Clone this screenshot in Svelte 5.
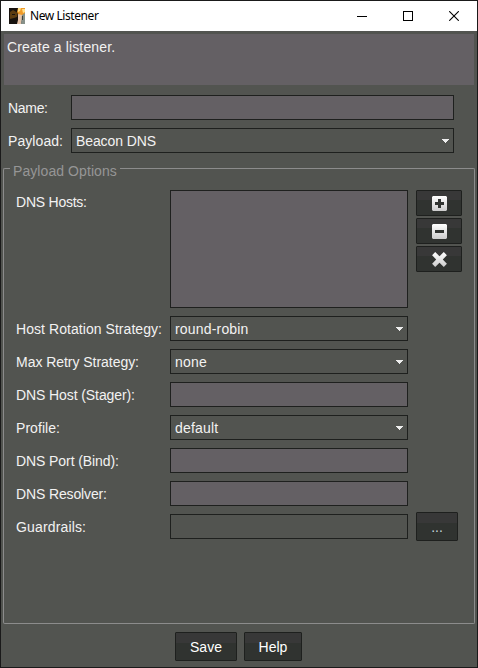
<script>
  const rows = [
    { label: 'Host Rotation Strategy:', kind: 'combo', value: 'round-robin', w: 146 },
    { label: 'Max Retry Strategy:', kind: 'combo', value: 'none', w: 123 },
    { label: 'DNS Host (Stager):', kind: 'text', w: 119 },
    { label: 'Profile:', kind: 'combo', value: 'default', w: 44 },
    { label: 'DNS Port (Bind):', kind: 'text', w: 103 },
    { label: 'DNS Resolver:', kind: 'text', w: 91 },
    { label: 'Guardrails:', kind: 'readonly', w: 70 }
  ];
</script>

{#snippet label(text, w)}
  <svg class="label" width={w} height="25"><text x="0" y="18" textLength={w} lengthAdjust="spacing">{text}</text></svg>
{/snippet}

{#snippet combo(value)}
  <div class="field combo">
    <span>{value}</span>
    <svg width="7" height="4" shape-rendering="crispEdges"><path d="M0 0h7v1H6v1H5v1H4v1H3V3H2V2H1V1H0z" fill="#eee" /></svg>
  </div>
{/snippet}

<div class="window">
  <header>
    <svg class="logo" width="16" height="16" viewBox="0 0 16 16">
      <path d="M0 0h16v16H0z" fill="#17120e" />
      <path d="M1 4l3-2 5 3-1 4-3 1-4 1z" fill="#5c3c10" />
      <path d="M3 6h3v1H3z" fill="#17120e" />
      <path d="M9 0h7v6l-3 2-3-1-2-3z" fill="#f09a28" />
      <path d="M9 0h3l-1 3-2 1zM13 1h3v3l-2 1z" fill="#ffe08a" />
      <path d="M9 6l4 1v5l-1 4H8l1-4z" fill="#e6c3a8" />
      <path d="M13 7l3-2v11h-4z" fill="#87918a" />
      <path d="M13 8h1v4h-1z" fill="#3b3f3c" />
    </svg>
    <span class="title">New Listener</span>
    <div class="controls">
      <svg width="10" height="10" shape-rendering="crispEdges"><path d="M0 5h10v1H0z" /></svg>
      <svg width="10" height="10" shape-rendering="crispEdges"><path d="M.5.5h9v9h-9z" fill="none" stroke="#000" /></svg>
      <svg width="10" height="10"><path d="M.2.2l9.6 9.6M9.8.2L.2 9.8" stroke="#000" stroke-width="1.1" /></svg>
    </div>
  </header>

  <div class="message">Create a listener.</div>

  <div class="top">
    <div class="row">{@render label('Name:', 40)}<div class="field text"></div></div>
    <div class="row">{@render label('Payload:', 55)}{@render combo('Beacon DNS')}</div>
  </div>

  <section class="group">
    <div class="legend"><i class="left"></i><span>Payload Options</span><i class="right"></i></div>
    <div class="body">
      <div class="row hosts">
        {@render label('DNS Hosts:', 71)}
        <div class="field text"></div>
        <div class="tools">
          <button aria-label="Add">
            <svg width="15" height="15"><path fill-rule="evenodd" d="M1 0h13l1 1v13l-1 1H1l-1-1V1zM6 3v3H3v3h3v3h3V9h3V6H9V3z" fill="url(#shine)" /></svg>
          </button>
          <button aria-label="Remove">
            <svg width="15" height="15"><path fill-rule="evenodd" d="M1 0h13l1 1v13l-1 1H1l-1-1V1zM3 6v3h9V6z" fill="url(#shine)" /></svg>
          </button>
          <button aria-label="Clear">
            <svg width="15" height="15"><path d="M3.2.1L7.5 4.2 11.8.1 14.9 3.2 10.8 7.5 14.9 11.8 11.8 14.9 7.5 10.8 3.2 14.9.1 11.8 4.2 7.5.1 3.2z" fill="url(#shine)" /></svg>
          </button>
        </div>
      </div>
      {#each rows as r}
        <div class="row">
          {@render label(r.label, r.w)}
          {#if r.kind === 'combo'}{@render combo(r.value)}{:else}<div class="field {r.kind}"></div>{/if}
          {#if r.kind === 'readonly'}<button class="more" aria-label="Edit guardrails">...</button>{/if}
        </div>
      {/each}
    </div>
  </section>

  <footer>
    <button class="save">Save</button>
    <button class="help">Help</button>
  </footer>
  <svg class="defs" width="0" height="0"><linearGradient id="shine" x1="0" y1="0" x2="0" y2="1"><stop offset="0" stop-color="#fff" /><stop offset="1" stop-color="#ccc" /></linearGradient></svg>
</div>

<style>
  :global(body) { overflow: hidden; }
  .window {
    box-sizing: border-box; width: 478px; height: 668px; border: 1px solid #1a1a1a;
    background: #525450; color: #f2f2f2; display: flex; flex-direction: column;
    font: 14px/16px "Liberation Sans", Arial, sans-serif;
  }
  .window * { box-sizing: border-box; }
  svg { display: block; flex: none; }
  .defs { height: 0; }
  header { height: 30px; flex: none; background: #fff; display: flex; align-items: center; padding-left: 8px; }
  .title { margin-left: 5px; color: #000; font: 12px/16px "Noto Sans", "Open Sans", sans-serif; letter-spacing: -0.43px; }
  .controls { margin-left: auto; display: flex; gap: 36px; padding-right: 18px; }
  .message { margin: 3px 3px 0; height: 51px; flex: none; background: #646064; padding: 5px 3px; letter-spacing: 0.13px; }
  .top { padding: 10px 0 0 7px; display: flex; flex-direction: column; gap: 8px; flex: none; }
  .row { display: flex; height: 25px; }
  .label { overflow: visible; }
  .label text { fill: #f2f2f2; }
  .field { border: 1px solid #1e201e; height: 25px; flex: none; }
  .text { background: #646064; }
  .top .field { width: 383px; margin-left: auto; margin-right: 23px; }
  .top .combo span { letter-spacing: -0.1px; }
  .combo { display: flex; align-items: center; justify-content: space-between; padding: 1px 4px 0 4px; }
  .combo span { letter-spacing: 0.18px; }
  .group { margin: 10px 2px 0; height: 461px; flex: none; display: flex; flex-direction: column; }
  .legend { height: 16px; display: flex; color: #969696; flex: none; }
  .legend span { padding: 0 3px; width: 110px; white-space: nowrap; letter-spacing: 0.08px; }
  .legend i { margin-top: 5px; height: 11px; border-top: 1px solid #8c8c8c; }
  .left { width: 7px; border-left: 1px solid #8c8c8c; border-radius: 2px 0 0 0; }
  .right { flex: 1; border-right: 1px solid #8c8c8c; border-radius: 0 2px 0 0; }
  .body { flex: 1; border: 1px solid #8c8c8c; border-top: 0; border-radius: 0 0 2px 2px; padding: 11px 0 0 12px; display: flex; flex-direction: column; gap: 8px; }
  .body .field { width: 238px; }
  .body .label { margin-right: auto; }
  .body .row { width: 392px; }
  .body .hosts { height: 118px; width: 446px; }
  .hosts .label { margin-top: -1px; }
  .hosts .field { height: 118px; }
  .tools { margin-left: 8px; display: flex; flex-direction: column; gap: 2px; }
  button {
    border: 1px solid #1e201e; border-radius: 1px; padding: 0; margin: 0; color: #fff;
    font: inherit; background: linear-gradient(#383838 0 38%, #303330 38%);
    display: flex; align-items: center; justify-content: center; flex: none;
  }
  .tools button { width: 46px; height: 26px; padding: 1px 0 0 1px; }
  .body .more { width: 42px; height: 29px; margin: -2px -50px 0 8px; color: #c5d5da; font-size: 14px; }
  footer { display: flex; gap: 7px; padding: 8px 0 0 174px; }
  footer button { height: 29px; padding-top: 1px; }
  .save { width: 62px; }
  .help { width: 58px; }
</style>
